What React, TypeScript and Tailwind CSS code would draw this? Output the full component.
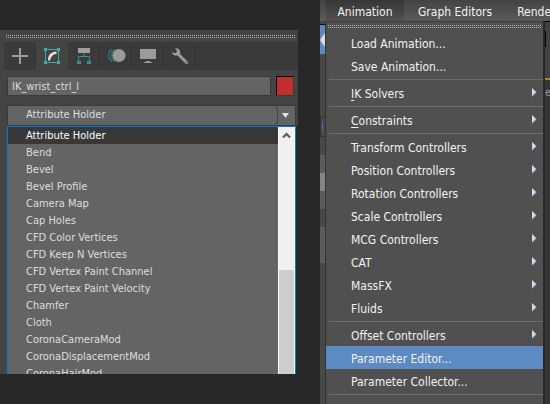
import React from "react";

const modifiers = [
  "Attribute Holder",
  "Bend",
  "Bevel",
  "Bevel Profile",
  "Camera Map",
  "Cap Holes",
  "CFD Color Vertices",
  "CFD Keep N Vertices",
  "CFD Vertex Paint Channel",
  "CFD Vertex Paint Velocity",
  "Chamfer",
  "Cloth",
  "CoronaCameraMod",
  "CoronaDisplacementMod",
  "CoronaHairMod",
];

type Item = { label: string; sub?: boolean; mnemonic?: boolean; active?: boolean };

const groups: Item[][] = [
  [{ label: "Load Animation..." }, { label: "Save Animation..." }],
  [{ label: "IK Solvers", sub: true, mnemonic: true }],
  [{ label: "Constraints", sub: true, mnemonic: true }],
  [
    { label: "Transform Controllers", sub: true },
    { label: "Position Controllers", sub: true },
    { label: "Rotation Controllers", sub: true },
    { label: "Scale Controllers", sub: true },
    { label: "MCG Controllers", sub: true },
    { label: "CAT", sub: true },
    { label: "MassFX", sub: true },
    { label: "Fluids", sub: true },
  ],
  [
    { label: "Offset Controllers", sub: true },
    { label: "Parameter Editor...", active: true },
    { label: "Parameter Collector..." },
  ],
];

function Grip() {
  return (
    <div className="flex flex-col gap-px">
      <div className="h-px bg-[repeating-linear-gradient(to_right,#b4b4b4_0_1px,transparent_1px_2px)]" />
      <div className="h-px bg-[repeating-linear-gradient(to_right,#b4b4b4_0_1px,transparent_1px_2px)]" />
    </div>
  );
}

function CreateIcon() {
  return (
    <svg width="18" height="18" viewBox="0 0 18 18" fill="#9b9b9b">
      <path d="M8 1h2v7h7v2h-7v7H8v-7H1V8h7z" />
    </svg>
  );
}

function ModifyIcon() {
  return (
    <svg width="18" height="18" viewBox="0 0 18 18" fill="none">
      <path d="M4 2.500h10M4 15.500h10M2.500 4v10M15.500 4v10" stroke="#3ba9a6" />
      <path d="M1.500 1.500h2v2h-2zM14.500 1.500h2v2h-2zM1.500 14.500h2v2h-2zM14.500 14.500h2v2h-2z" stroke="#45cfca" fill="#333" />
      <path d="M5 13.500C5 8 8 4.500 13.500 4.500V7C10 7 8 9.500 7 13.500z" fill="#e2e2e2" />
    </svg>
  );
}

function HierarchyIcon() {
  return (
    <svg width="18" height="18" viewBox="0 0 18 18" fill="none">
      <path d="M3 1h12v5H3z" fill="#a0a0a0" />
      <path d="M9 6v3M3.500 14V9.500h11V14" stroke="#37908e" />
      <path d="M2 14h4v3H2zM12 14h4v3h-4z" fill="#37908e" />
    </svg>
  );
}

function MotionIcon() {
  return (
    <svg width="20" height="18" viewBox="0 0 20 18" fill="none">
      <path d="M6 2.500a7 7 0 0 0 0 12M9 2.500a7 7 0 0 0 0 12" stroke="#33716f" strokeWidth="1.500" />
      <circle cx="13" cy="8.500" r="6.500" fill="#9b9b9b" />
    </svg>
  );
}

function DisplayIcon() {
  return (
    <svg width="18" height="18" viewBox="0 0 18 18" fill="#9b9b9b">
      <path d="M1 2h16v10H1zM7 14h4v1h2v1H5v-1h2z" />
    </svg>
  );
}

function WrenchIcon() {
  return (
    <svg width="18" height="18" viewBox="0 0 18 18" fill="none">
      <path d="M7 7l8.500 8.500" stroke="#9b9b9b" strokeWidth="3" strokeLinecap="round" />
      <path d="M4 1l2 3-1 2H2L1 4c-.5 3 2 5 5 4.500L9 7c1-3-1-6-5-6z" fill="#9b9b9b" />
      <path d="M14.500 14.500h1v1h-1z" fill="#3a3a3a" />
    </svg>
  );
}

const tabs = [
  { name: "Create", icon: CreateIcon },
  { name: "Modify", icon: ModifyIcon },
  { name: "Hierarchy", icon: HierarchyIcon },
  { name: "Motion", icon: MotionIcon },
  { name: "Display", icon: DisplayIcon },
  { name: "Utilities", icon: WrenchIcon },
];

function CommandPanel() {
  return (
    <section aria-label="Command panel" className="mt-[30px] w-[298px] shrink-0 text-[11px] text-[#dedede]">
      <div className="bg-[#444]">
        <div className="pt-[5px] pr-[3px] pb-[4px] pl-[6px]">
          <Grip />
        </div>
        <div className="ml-1 flex h-7 bg-[#3a3a3a]">
          {tabs.map(({ name, icon: Icon }) => (
            <button
              key={name}
              aria-label={name}
              className={
                name === "Modify"
                  ? "flex w-8 items-center justify-center bg-[#444]"
                  : "flex w-8 items-center justify-center bg-[linear-gradient(#303030,#303030)] bg-[length:1px_20px] bg-right bg-no-repeat"
              }
            >
              <Icon />
            </button>
          ))}
        </div>
        <div className="mt-1.5 flex h-5 items-center pr-1 pl-[7px]">
          <input
            aria-label="Object name"
            defaultValue="IK_wrist_ctrl_l"
            className="h-5 min-w-0 flex-1 border border-[#3a3a3a] bg-[#646464] px-1 text-[11px] outline-none"
          />
          <button aria-label="Object color" className="ml-[5px] h-5 w-[18px] border border-t-black border-l-black border-r-[#3a3a3a] border-b-[#3a3a3a] bg-[#c22e2e]" />
        </div>
        <div className="relative mt-[9px] mr-[2px] ml-[7px] h-[21px]">
          <select
            aria-label="Modifier list"
            className="h-[21px] w-full appearance-none border border-[#3a3a3a] bg-[#646464] pl-[18px] text-[11px] outline-none"
          >
            <option>Attribute Holder</option>
          </select>
          <div className="pointer-events-none absolute top-[2px] right-[18px] h-[17px] w-[3px] border border-l-0 border-[#444]" />
          <svg className="pointer-events-none absolute top-2 right-[7px]" width="7" height="5" viewBox="0 0 7 5">
            <path d="M0 0h7L3.500 5z" fill="#e4e4e4" />
          </svg>
        </div>
      </div>
      <div className="flex h-[248px]">
        <div className="w-[7px] bg-[#444]" />
        <div className="mr-[2px] flex min-w-0 flex-1 border border-b-0 border-[#0078d7] bg-[#646464]">
          <ul role="listbox" aria-label="Modifiers" className="min-w-0 flex-1 overflow-hidden">
            {modifiers.map((m, i) => (
              <li
                key={m}
                role="option"
                aria-selected={i === 0}
                className={
                  i === 0
                    ? "h-[17px] bg-[#383838] pt-px pl-[18px] leading-4 whitespace-nowrap text-white"
                    : "h-[17px] pt-px pl-[18px] leading-4 whitespace-nowrap"
                }
              >
                {m}
              </li>
            ))}
          </ul>
          <div className="flex w-[17px] flex-col border-x border-white bg-[#f0f0f0]">
            <button aria-label="Scroll up" className="flex h-[17px] items-center justify-center">
              <svg width="9" height="7" viewBox="0 0 9 7">
                <path d="M1 5.500l3.500-3.500L8 5.500" fill="none" stroke="#555" strokeWidth="2" />
              </svg>
            </button>
            <div className="mt-[126px] flex-1 bg-[#cdcdcd]" />
          </div>
        </div>
      </div>
    </section>
  );
}

function MenuRow({ item }: { item: Item }) {
  return (
    <button
      role="menuitem"
      className={
        item.active
          ? "flex h-[23px] w-full items-center bg-[#5d8ac2] pr-[6px] pl-[25px] text-left whitespace-nowrap"
          : "flex h-[23px] w-full items-center pr-[6px] pl-[25px] text-left whitespace-nowrap"
      }
    >
      <span className="flex-1 pt-0.5">
        {item.mnemonic ? (
          <>
            <span className="underline underline-offset-2">{item.label[0]}</span>
            {item.label.slice(1)}
          </>
        ) : (
          item.label
        )}
      </span>
      {item.sub && (
        <svg width="5" height="9" viewBox="0 0 5 9">
          <path d="M0 0l5 4.500L0 9z" fill="#5d8ac2" />
          <path d="M0 0l4 4L0 8z" fill="#dcdcdc" />
        </svg>
      )}
    </button>
  );
}

function AppWindow() {
  return (
    <section aria-label="Main menu" className="ml-[22px] flex min-w-0 flex-1 flex-col overflow-hidden text-[12px] text-[#f2f2f2]">
      <nav className="flex h-[21px] shrink-0 bg-linear-to-b from-[#434343] to-[#5a5a5a] pl-[6px] whitespace-nowrap">
        <button className="w-[78px] shrink-0 bg-linear-to-b from-[#383838] to-[#505050] pt-[2px]">Animation</button>
        <button className="ml-[14px] shrink-0 pt-[2px]">Graph Editors</button>
        <button className="ml-[25px] shrink-0 pt-[2px]">Rende</button>
      </nav>
      <div className="flex min-h-0 flex-1">
        <div className="w-[6px] shrink-0 border-r border-[#343434] bg-[#484848]">
          <div className="h-1 border-b border-black" />
          <svg width="5" height="29" viewBox="0 0 5 29">
            <path d="M0 0h5v29H0z" fill="#5d8ac2" />
            <path d="M5 8v14L0 15z" fill="#ddd" />
          </svg>
          <div className="mt-[62px] h-[21px] border border-r-0 border-[#333] py-1.5 pl-px">
            <div className="h-2 w-px bg-[#3e6fc4]" />
          </div>
          <div className="mt-[18px] h-[18px] bg-[#5c5c5c]" />
          <div className="h-[18px] bg-[#858585]" />
          <div className="h-[18px] bg-[#5c5c5c]" />
          <div className="mt-[18px] h-[36px] bg-[#5c5c5c]" />
        </div>
        <div role="menu" className="min-w-0 flex-1 border-t border-[#3c3c3c] bg-[#505050]">
          <div className="px-[2px] pt-[3px] pb-[3px]">
            <Grip />
          </div>
          {groups.map((group, i) => (
            <div key={i}>
              {group.map((item) => (
                <MenuRow key={item.label} item={item} />
              ))}
              <div className="ml-[3px] h-1 pt-[2px]">
                <div className="h-px bg-[#6c6c6c]" />
              </div>
            </div>
          ))}
        </div>
        <div className="w-[7px] shrink-0 overflow-hidden border-l-2 border-[#292929] bg-[#353535]">
          <div className="h-[57px] border-t border-black bg-[#414141] pt-[9px]">
            <div className="h-4 w-px bg-black" />
          </div>
          <div className="h-[2px] bg-[#a08630]" />
          <div className="mt-[5px] text-[11px] leading-4 text-[#999]">e</div>
        </div>
      </div>
    </section>
  );
}

export default function App() {
  return (
    <main className="flex h-screen overflow-hidden bg-[#282828] font-['DejaVu_Sans_Condensed','Noto_Sans',sans-serif]">
      <CommandPanel />
      <AppWindow />
    </main>
  );
}
